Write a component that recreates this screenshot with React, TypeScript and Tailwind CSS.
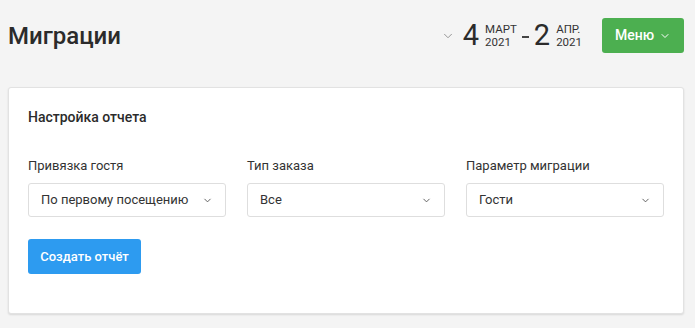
import { ChevronDown } from "lucide-react";

const FIELDS = [
  { label: "Привязка гостя", value: "По первому посещению" },
  { label: "Тип заказа", value: "Все" },
  { label: "Параметр миграции", value: "Гости" },
];

function DatePart({ day, month, year }: { day: string; month: string; year: string }) {
  return (
    <div className="flex items-center gap-[6px]">
      <span className="text-[29px] leading-none font-normal text-[#2b2b2b]">{day}</span>
      <div className="flex flex-col text-[11.5px] leading-[13px] text-[#333]">
        <span>{month}</span>
        <span>{year}</span>
      </div>
    </div>
  );
}

export default function App() {
  return (
    <div
      className="min-h-[328px] w-full bg-[#f4f4f4] pl-2 pr-[11px] pt-[18px] text-[#333]"
      style={{ fontFamily: "Roboto, 'Noto Sans', sans-serif" }}
    >
      <header className="flex h-[35px] items-center justify-between">
        <h1 className="text-[24px] leading-none font-medium text-[#2b2b2b]">Миграции</h1>
        <div className="flex items-center">
          <ChevronDown className="mr-[8px] h-[14px] w-[14px] text-[#888]" strokeWidth={1.5} />
          <DatePart day="4" month="МАРТ" year="2021" />
          <span className="mx-[5px] mt-[2px] h-[2px] w-[7px] bg-[#444]" />
          <DatePart day="2" month="АПР." year="2021" />
          <button className="ml-[20px] flex h-[35px] w-[82px] items-center justify-center gap-[5px] rounded-[3px] bg-[#4caf50] text-[14px] font-medium text-white">
            Меню
            <ChevronDown className="h-[12px] w-[12px]" strokeWidth={2} />
          </button>
        </div>
      </header>

      <section className="mt-[34px] rounded-[3px] border border-[#e2e2e2] bg-white px-[19px] pt-[19px] pb-[39px] shadow-[0_1px_2px_rgba(0,0,0,0.12)]">
        <h2 className="text-[14px] leading-[20px] font-medium text-[#2b2b2b]">Настройка отчета</h2>
        <div className="mt-[29px] grid grid-cols-3 gap-x-[21px]">
          {FIELDS.map((f) => (
            <div key={f.label} className="flex flex-col">
              <span className="text-[13px] leading-[20px] text-[#333]">{f.label}</span>
              <div className="mt-[7px] flex h-[34px] items-center justify-between rounded-[3px] border border-[#dedede] bg-white pl-[12px] pr-[12px]">
                <span className="text-[13px] text-[#333]">{f.value}</span>
                <ChevronDown className="h-[11px] w-[11px] text-[#555]" strokeWidth={2} />
              </div>
            </div>
          ))}
        </div>
        <button className="mt-[22px] h-[35px] w-[113px] rounded-[3px] bg-[#2d9bf0] text-[13px] font-medium text-white">
          Создать отчёт
        </button>
      </section>
    </div>
  );
}
